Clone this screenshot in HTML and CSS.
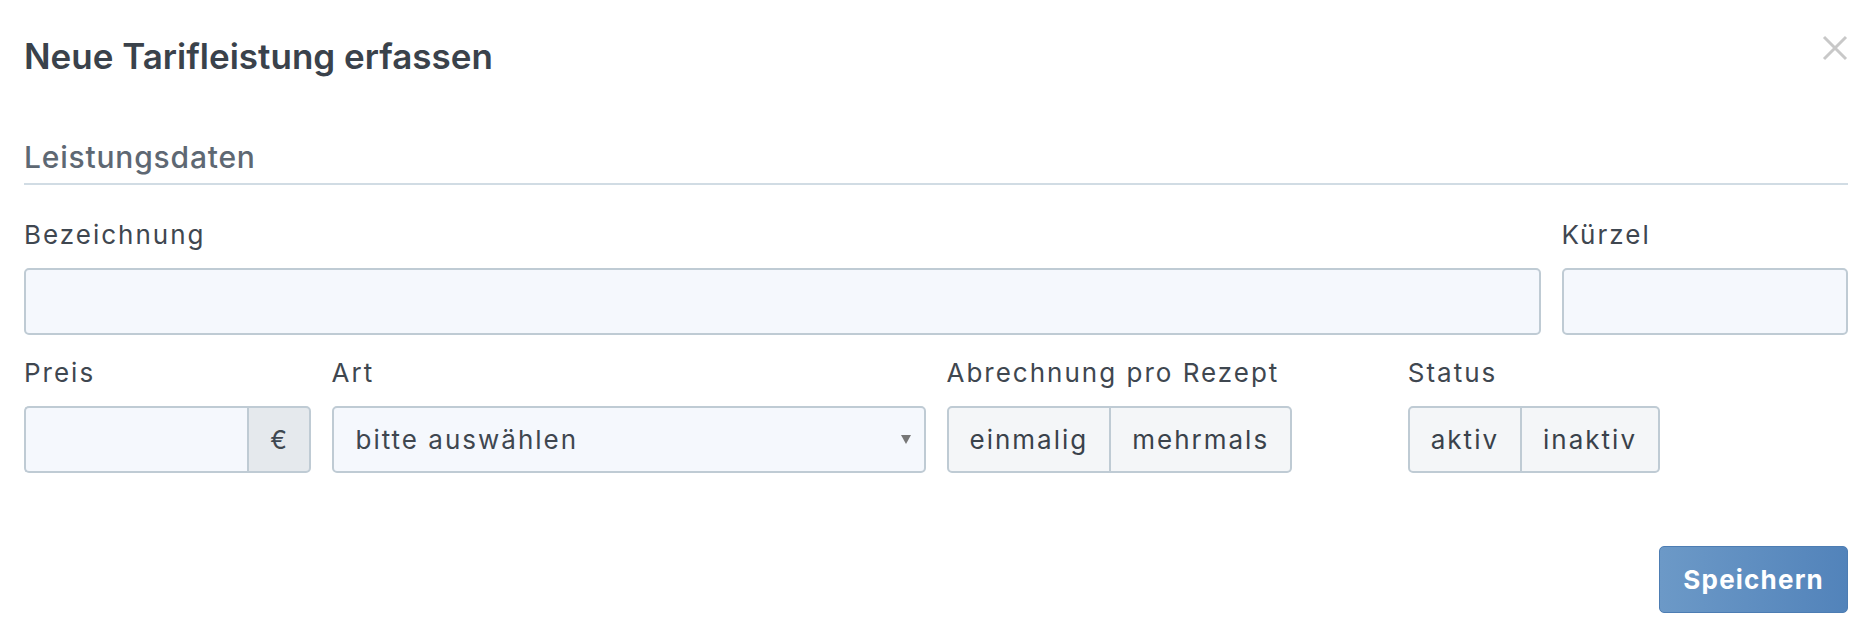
FILE: index.html
```html
<html>
  <head>
    <title>Neue Tarifleistung erfassen</title>
    <meta charset="UTF-8" />
    <link rel="stylesheet" href="styles.css">
  </head>
  <body>
    <div class="modal">
      <div class="modal-header">
        <h1 class="modal-title">Neue Tarifleistung erfassen</h1>
        <button type="button" class="close" aria-label="Schließen">
          <svg width="26" height="26" viewBox="0 0 26 26">
            <path d="M2 2 L24 24 M24 2 L2 24" stroke="#c8c8c8" stroke-width="3" fill="none" />
          </svg>
        </button>
      </div>

      <form class="modal-body">
        <h2 class="section-title">Leistungsdaten</h2>

        <div class="row">
          <div class="field span-10">
            <label for="bezeichnung">Bezeichnung</label>
            <input type="text" id="bezeichnung" class="form-control" />
          </div>
          <div class="field span-2">
            <label for="kuerzel">Kürzel</label>
            <input type="text" id="kuerzel" class="form-control" />
          </div>
        </div>

        <div class="row">
          <div class="field span-2">
            <label for="preis">Preis</label>
            <div class="input-group">
              <input type="text" id="preis" class="form-control" />
              <span class="addon">€</span>
            </div>
          </div>
          <div class="field span-4">
            <label for="art">Art</label>
            <div class="select-wrap">
              <select id="art" class="form-control">
                <option>bitte auswählen</option>
              </select>
            </div>
          </div>
          <div class="field span-3">
            <label>Abrechnung pro Rezept</label>
            <div class="btn-group">
              <button type="button">einmalig</button>
              <button type="button">mehrmals</button>
            </div>
          </div>
          <div class="field span-3">
            <label>Status</label>
            <div class="btn-group">
              <button type="button">aktiv</button>
              <button type="button">inaktiv</button>
            </div>
          </div>
        </div>
      </form>

      <div class="modal-footer">
        <button type="submit" class="btn-primary">Speichern</button>
      </div>
    </div>
  </body>
</html>
```

FILE: styles.css
```css
body {
  margin: 0;
  font-family: Inter, "Noto Sans", sans-serif;
  background-color: #fff;
  color: #3f4750;
}

.modal {
  padding: 35px 26px 0 24px;
}

.modal-header {
  display: flex;
  justify-content: space-between;
  align-items: flex-start;
}

.modal-title {
  margin: 0;
  font-size: 35px;
  line-height: 42px;
  font-weight: 600;
  color: #3a424b;
}

.close {
  border: 0;
  background: none;
  padding: 0;
  width: 26px;
  height: 26px;
}

.close svg {
  display: block;
}

.modal-body {
  margin: 0;
}

.section-title {
  margin: 62px 0 0 0;
  padding-bottom: 8px;
  font-size: 30px;
  line-height: 36px;
  font-weight: 500;
  letter-spacing: 0.8px;
  color: #5e6873;
  border-bottom: 2px solid #d1dce4;
}

.row {
  display: grid;
  grid-template-columns: repeat(12, 1fr);
  column-gap: 21px;
}

.span-2 { grid-column: span 2; }
.span-3 { grid-column: span 3; }
.span-4 { grid-column: span 4; }
.span-10 { grid-column: span 10; }

.field label {
  display: block;
  font-size: 26px;
  line-height: 32px;
  letter-spacing: 2px;
  margin: 34px 0 17px 0;
}

.row + .row .field label {
  margin-top: 22px;
}

.form-control {
  display: block;
  box-sizing: border-box;
  width: 100%;
  height: 67px;
  padding: 0 22px;
  font-family: inherit;
  font-size: 26px;
  letter-spacing: 2px;
  color: #3f4750;
  background-color: #f5f8fd;
  border: 2px solid #bfcbd4;
  border-radius: 5px;
}

.input-group {
  display: flex;
}

.input-group .form-control {
  flex: 1;
  min-width: 0;
  border-right: 0;
  border-radius: 5px 0 0 5px;
}

.addon {
  display: flex;
  align-items: center;
  justify-content: center;
  width: 64px;
  height: 67px;
  box-sizing: border-box;
  font-size: 25px;
  background-color: #e5e9ed;
  border: 2px solid #bfcbd4;
  border-radius: 0 5px 5px 0;
}

.select-wrap {
  position: relative;
}

.select-wrap select {
  appearance: none;
  -webkit-appearance: none;
}

.select-wrap::after {
  content: "";
  position: absolute;
  right: 15px;
  top: 29px;
  border-left: 5px solid transparent;
  border-right: 5px solid transparent;
  border-top: 9px solid #777;
}

.btn-group {
  display: inline-flex;
}

.btn-group button {
  height: 67px;
  padding: 0 21px;
  font-family: inherit;
  font-size: 26px;
  letter-spacing: 2px;
  color: #3a424b;
  background-color: #f4f6f8;
  border: 2px solid #bfcbd4;
}

.btn-group button:first-child {
  border-radius: 5px 0 0 5px;
}

.btn-group button + button {
  border-left: 0;
  border-radius: 0 5px 5px 0;
}

.modal-footer {
  display: flex;
  justify-content: flex-end;
  margin-top: 73px;
}

.btn-primary {
  height: 67px;
  padding: 0 23px;
  font-family: inherit;
  font-size: 26px;
  font-weight: 700;
  letter-spacing: 1.2px;
  color: #fff;
  background: linear-gradient(to right, #6c99c7, #5283ba);
  border: 1px solid #4d7db3;
  border-radius: 5px;
}
```
